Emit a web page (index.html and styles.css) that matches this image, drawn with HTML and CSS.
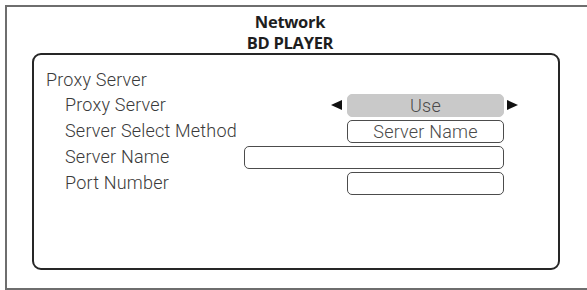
FILE: index.html
```html
<!DOCTYPE html>
<html>
<head>
<meta charset="utf-8">
<link rel="stylesheet" href="styles.css">
</head>
<body>
<div class="frame">
  <div class="title">
    <div>Network</div>
    <div>BD PLAYER</div>
  </div>
  <div class="panel">
    <div class="section">Proxy Server</div>
    <div class="row">
      <span class="label">Proxy Server</span>
      <span class="arrow left"></span>
      <span class="field selected">Use</span>
      <span class="arrow right"></span>
    </div>
    <div class="row">
      <span class="label">Server Select Method</span>
      <span class="field boxed">Server Name</span>
    </div>
    <div class="row">
      <span class="label">Server Name</span>
      <span class="field boxed wide"></span>
    </div>
    <div class="row">
      <span class="label">Port Number</span>
      <span class="field boxed"></span>
    </div>
  </div>
</div>
</body>
</html>
```

FILE: styles.css
```css
html, body {
  margin: 0;
  padding: 0;
  background: #ffffff;
}
body {
  width: 587px;
  height: 290px;
  overflow: hidden;
}
.frame {
  box-sizing: border-box;
  margin: 5px 0 0 5px;
  width: 600px;
  height: 285px;
  border: 2px solid #6e6e6e;
  border-right: none;
}
.title {
  font-family: "Open Sans", "Liberation Sans", sans-serif;
  font-weight: 700;
  font-size: 16.5px;
  line-height: 21px;
  color: #1e1e1e;
  text-align: center;
  width: 566px;
  padding-top: 4px;
  letter-spacing: -0.3px;
}
.panel {
  box-sizing: border-box;
  margin: 0 0 0 25px;
  width: 528px;
  height: 217px;
  border: 2.5px solid #262626;
  border-radius: 9px;
  padding: 13px 0 0 12px;
  font-family: "Roboto", "Liberation Sans", sans-serif;
  font-weight: 300;
  font-size: 18px;
  letter-spacing: 0.2px;
  color: #3a3a3a;
}
.section {
  line-height: 24px;
  height: 24px;
}
.row {
  display: grid;
  grid-template-columns: 179px 87px 16px 157px 14px;
  align-items: center;
  height: 26px;
  padding-left: 19px;
}
.label {
  grid-column: 1;
  grid-row: 1;
  line-height: 24px;
  white-space: nowrap;
}
.field {
  grid-column: 4;
  grid-row: 1;
  box-sizing: border-box;
  height: 23px;
  line-height: 21px;
  text-align: center;
  color: #4a4a4a;
  border-radius: 5px;
}
.field.selected {
  background: #c9c9c9;
  border: 1px solid #c9c9c9;
}
.field.boxed {
  background: #ffffff;
  border: 1.5px solid #4c4c4c;
}
.field.wide {
  grid-column: 2 / 5;
}
.arrow {
  grid-row: 1;
  width: 0;
  height: 0;
  border-top: 5.5px solid transparent;
  border-bottom: 5.5px solid transparent;
}
.arrow.left {
  grid-column: 3;
  justify-self: start;
  border-right: 11px solid #111111;
}
.arrow.right {
  grid-column: 5;
  justify-self: end;
  border-left: 11px solid #111111;
}
```
